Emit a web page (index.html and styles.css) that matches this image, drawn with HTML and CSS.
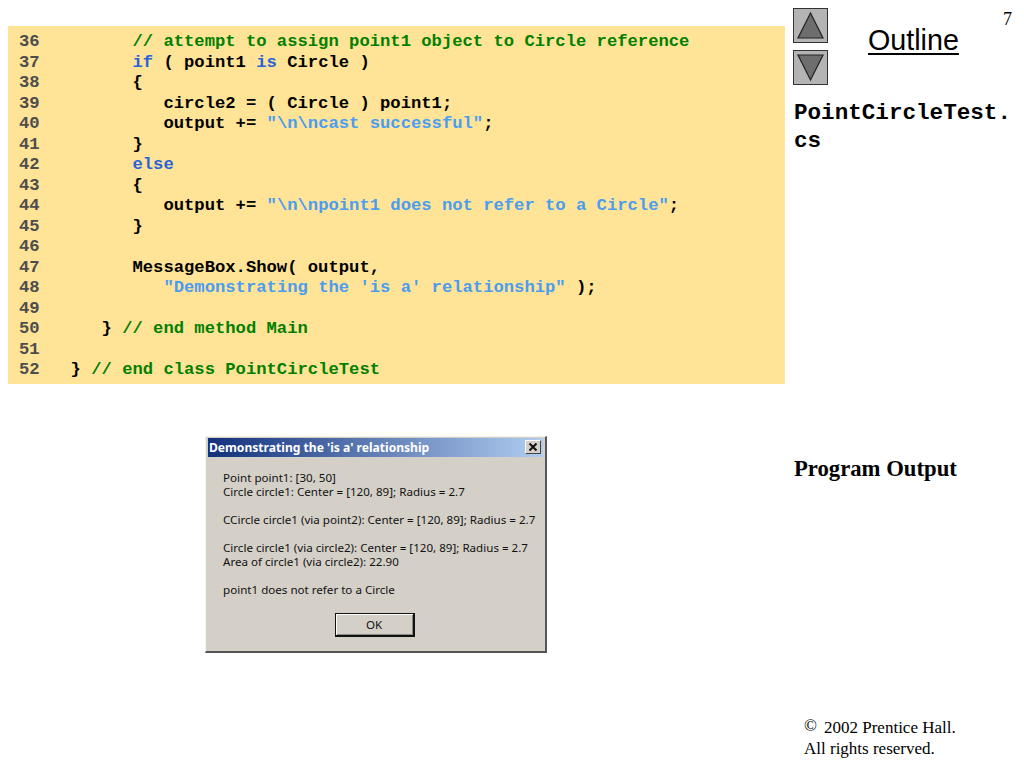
FILE: index.html
```html
<!DOCTYPE html>
<html lang="en">
<head>
<meta charset="utf-8">
<title>PointCircleTest.cs</title>
<link rel="stylesheet" href="styles.css">
</head>
<body>
<div class="slide">
  <main class="main">
    <pre class="code"><code class="src"><span class="ln">36</span>         <span class="cm">// attempt to assign point1 object to Circle reference</span>
<span class="ln">37</span>         <span class="kw">if</span> ( point1 <span class="kw">is</span> Circle )
<span class="ln">38</span>         {
<span class="ln">39</span>            circle2 = ( Circle ) point1;
<span class="ln">40</span>            output += <span class="st">"\n\ncast successful"</span>;
<span class="ln">41</span>         }
<span class="ln">42</span>         <span class="kw">else</span>
<span class="ln">43</span>         {
<span class="ln">44</span>            output += <span class="st">"\n\npoint1 does not refer to a Circle"</span>;
<span class="ln">45</span>         }
<span class="ln">46</span>
<span class="ln">47</span>         MessageBox.Show( output,
<span class="ln">48</span>            <span class="st">"Demonstrating the 'is a' relationship"</span> );
<span class="ln">49</span>
<span class="ln">50</span>      } <span class="cm">// end method Main</span>
<span class="ln">51</span>
<span class="ln">52</span>   } <span class="cm">// end class PointCircleTest</span></code></pre>
    <div class="dialog">
      <div class="titlebar">
        <span class="title">Demonstrating the 'is a' relationship</span>
        <span class="close"><svg width="10" height="10" viewBox="0 0 10 10"><path d="M1.5 1.5 8.5 8.5M8.5 1.5 1.5 8.5" stroke="#111" stroke-width="2"/></svg></span>
      </div>
      <div class="message">
        <p>Point point1: [30, 50]<br>Circle circle1: Center = [120, 89]; Radius = 2.7</p>
        <p>CCircle circle1 (via point2): Center = [120, 89]; Radius = 2.7</p>
        <p>Circle circle1 (via circle2): Center = [120, 89]; Radius = 2.7<br>Area of circle1 (via circle2): 22.90</p>
        <p>point1 does not refer to a Circle</p>
      </div>
      <div class="actions"><span class="ok">OK</span></div>
    </div>
  </main>
  <aside class="side">
    <div class="side-top">
      <div class="nav">
        <span class="navbtn"><svg width="29" height="29" viewBox="0 0 29 29"><path d="M14.5 2 27 27H2Z" fill="#6e6e6e" stroke="#222" stroke-width="1.2"/></svg></span>
        <span class="navbtn"><svg width="29" height="29" viewBox="0 0 29 29"><path d="M14.5 27 27 2H2Z" fill="#6e6e6e" stroke="#222" stroke-width="1.2"/></svg></span>
      </div>
      <div class="outline">Outline</div>
      <div class="pageno">7</div>
    </div>
    <div class="filename">PointCircleTest.<br>cs</div>
    <div class="prog">Program Output</div>
    <div class="copy"><span class="cr">©</span>2002 Prentice Hall.<br>All rights reserved.</div>
  </aside>
</div>
</body>
</html>
```
FILE: styles.css
```css
html, body { margin: 0; padding: 0; background: #fff; }
.slide { display: flex; width: 1024px; height: 768px; overflow: hidden; }
.main { width: 785px; padding: 26px 0 0 8px; box-sizing: border-box; flex: none; }
.code {
  margin: 0; height: 358px; box-sizing: border-box; padding: 6px 0 0 11px;
  background: #ffe397; color: #000;
  font: bold 17.19px/20.5px "Liberation Mono", monospace;
  overflow: hidden;
}
.src { font: inherit; }
.ln { color: #4d4d4d; }
.cm { color: #008000; }
.kw { color: #2a62dc; }
.st { color: #4a9df0; }

.dialog {
  width: 342px; height: 217px; margin: 52px 0 0 197px; box-sizing: border-box;
  background: #d4d0c8; border: 1px solid #f2f1ed; border-right: 2px solid #555; border-bottom: 2px solid #555;
  padding: 1px 2px 2px; font-family: "Noto Sans", sans-serif; color: #111;
  display: flex; flex-direction: column;
}
.titlebar {
  height: 19px; display: flex; align-items: center; justify-content: space-between; flex: none;
  background: linear-gradient(90deg, #12307c, #b0cdf0);
  padding: 0 2px 1px 1px; box-sizing: border-box;
}
.title { color: #fff; font-size: 12.1px; font-weight: 700; white-space: nowrap; }
.close {
  width: 16px; height: 14px; display: flex; align-items: center; justify-content: center;
  background: #d4d0c8; border: 1px solid; border-color: #fff #444 #444 #fff;
  box-sizing: border-box;
}
.message { padding: 14px 0 0 15px; font-size: 11.6px; line-height: 14px; white-space: nowrap; }
.message p { margin: 0 0 14px; }
.actions { display: flex; justify-content: center; margin-top: 2px; }
.ok {
  width: 80px; height: 24px; box-sizing: border-box; display: flex; align-items: center; justify-content: center;
  font-size: 11.6px; border: 1px solid #111; border-right-width: 2px; border-bottom-width: 2px;
  box-shadow: inset 1px 1px 0 #fff, inset -1px -1px 0 #888; margin-left: -2px;
}

.side { flex: none; width: 239px; padding: 8px 0 0 8px; box-sizing: border-box; display: flex; flex-direction: column; color: #000; }
.side-top { display: flex; }
.nav { display: flex; flex-direction: column; gap: 7px; width: 35px; flex: none; }
.navbtn {
  width: 35px; height: 35px; box-sizing: border-box; background: #b4b4b4; border: 1px solid #333;
  display: flex; align-items: center; justify-content: center;
}
.outline {
  margin: 14px 0 0 40px; width: 90px; font: 28.7px/36px "Liberation Sans", sans-serif;
  text-decoration: underline; text-decoration-thickness: 2px; text-underline-offset: 3px;
}
.pageno { margin: 1px 0 0 45px; font: 18px/20px "Liberation Serif", serif; }
.filename { margin: 14px 0 0 1px; font: bold 22.6px/28px "Liberation Mono", monospace; }
.prog { margin-top: 300px; margin-left: 1px; font: bold 22.7px/28px "Liberation Serif", serif; }
.copy { margin: 234px 0 0 11px; font: 17px/21px "Liberation Serif", serif; }
.cr { display: inline-block; width: 20px; line-height: 0; position: relative; top: -2px; }
```
